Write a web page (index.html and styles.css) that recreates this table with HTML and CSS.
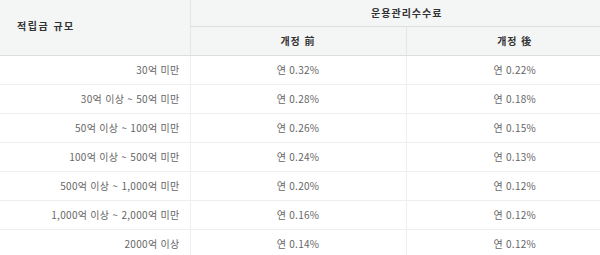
FILE: index.html
```html
<!DOCTYPE html>
<html lang="ko">
<head>
<meta charset="utf-8">
<link rel="stylesheet" href="styles.css">
</head>
<body>
<div class="wrap">
<table class="fee">
  <colgroup><col class="c1"><col class="c2"><col class="c3"></colgroup>
  <thead>
    <tr class="h1">
      <th rowspan="2" class="size">적립금 규모</th>
      <th colspan="2">운용관리수수료</th>
    </tr>
    <tr class="h2">
      <th>개정 前</th>
      <th>개정 後</th>
    </tr>
  </thead>
  <tbody>
    <tr><td class="l">30억 미만</td><td>연 0.32%</td><td>연 0.22%</td></tr>
    <tr><td class="l">30억 이상 ~ 50억 미만</td><td>연 0.28%</td><td>연 0.18%</td></tr>
    <tr><td class="l">50억 이상 ~ 100억 미만</td><td>연 0.26%</td><td>연 0.15%</td></tr>
    <tr><td class="l">100억 이상 ~ 500억 미만</td><td>연 0.24%</td><td>연 0.13%</td></tr>
    <tr><td class="l">500억 이상 ~ 1,000억 미만</td><td>연 0.20%</td><td>연 0.12%</td></tr>
    <tr><td class="l">1,000억 이상 ~ 2,000억 미만</td><td>연 0.16%</td><td>연 0.12%</td></tr>
    <tr><td class="l">2000억 이상</td><td>연 0.14%</td><td>연 0.12%</td></tr>
  </tbody>
</table>
</div>
</body>
</html>
```
FILE: styles.css
```css
html, body {
  margin: 0;
  padding: 0;
  background: #ffffff;
}
.wrap {
  width: 600px;
  overflow: hidden;
}
.fee {
  width: 623px;
  border-collapse: collapse;
  table-layout: fixed;
  font-family: "Noto Sans CJK KR", "Noto Sans", sans-serif;
  font-size: 10px;
  letter-spacing: 0.3px;
}
.c1 { width: 190px; }
.c2 { width: 216px; }
.c3 { width: 217px; }
.fee th {
  background: #f4f6f6;
  color: #333;
  font-weight: 700;
  border-bottom: 1px solid #dcdfe0;
  border-left: 1px solid #e3e6e7;
  padding: 0;
  text-align: center;
  line-height: 14px;
  letter-spacing: 1px;
}
.fee th.size {
  border-left: none;
  text-align: left;
  padding-left: 17px;
  padding-bottom: 3px;
  letter-spacing: 1.5px;
}
.h1 th { height: 26px; }
.h1 th.size { height: 51px; }
.h2 th { height: 28px; }
.fee td {
  height: 28px;
  padding: 0;
  color: #666;
  text-align: center;
  border-bottom: 1px solid #eceef0;
  border-left: 1px solid #eceef0;
  line-height: 14px;
}
.fee td.l {
  text-align: right;
  padding-right: 10px;
  border-left: none;
}
```
